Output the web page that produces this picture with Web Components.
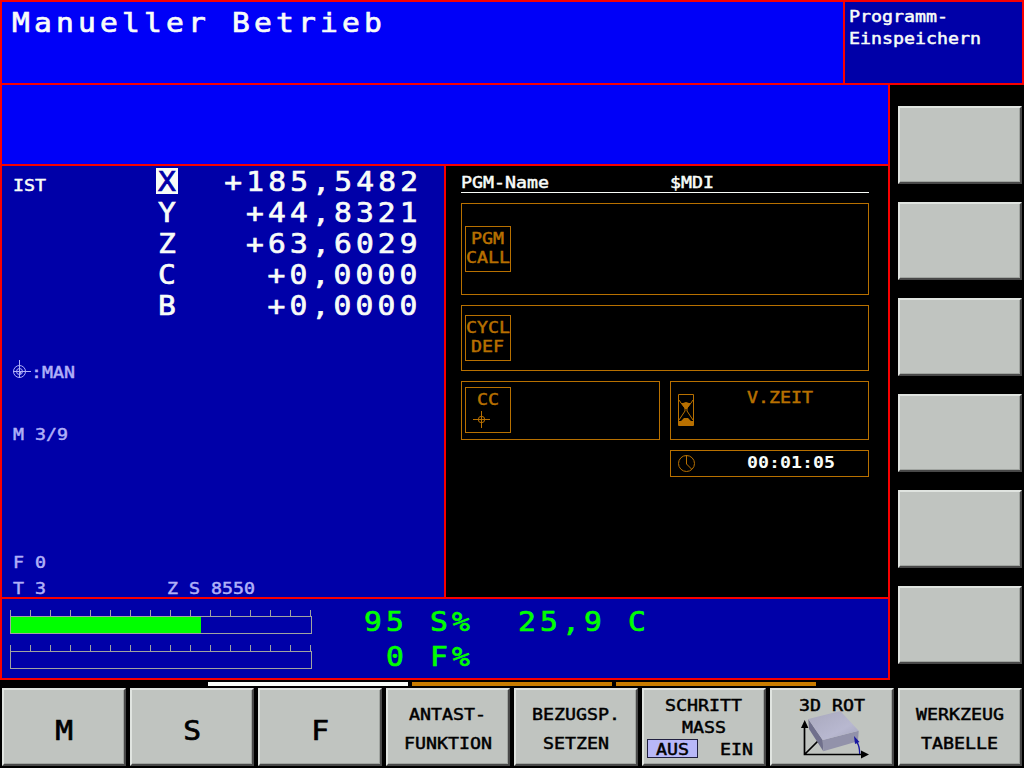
<!DOCTYPE html>
<html lang="de">
<head>
<meta charset="utf-8">
<title>Manueller Betrieb</title>
<style>
html,body{margin:0;padding:0;background:#000}
body{width:1024px;height:768px;overflow:hidden;font-family:"DejaVu Sans Mono","Liberation Mono",monospace}
</style>
</head>
<body>
<cnc-screen></cnc-screen>
<script>
const define = (name, html) => customElements.define(name, class extends HTMLElement {
  constructor() {
    super();
    const t = document.createElement('template');
    t.innerHTML = html;
    this.attachShadow({mode: 'open'}).append(t.content.cloneNode(true));
  }
});

/* Small terminal text: 11px character cells */
define('t-small', `<style>
:host{display:block;height:16px;white-space:pre}
span{display:inline-block;vertical-align:top;font-size:15px;line-height:16px;transform:scaleX(1.218);transform-origin:var(--origin,0) 0;-webkit-text-stroke:.45px currentColor}
:host([bold]) span{font-weight:bold;-webkit-text-stroke:0}
:host([center]){text-align:center;--origin:50%}
</style><span><slot></slot></span>`);

/* Large terminal text: 22px character cells */
define('t-large', `<style>
:host{display:block;height:26px;white-space:pre}
span{display:inline-block;vertical-align:top;font-size:27.4px;line-height:26px;letter-spacing:3.875px;padding-left:1.94px;margin-right:-1.94px;transform:scaleX(1.08);transform-origin:var(--origin,0) 0;-webkit-text-stroke:.7px currentColor}
</style><span><slot></slot></span>`);

define('soft-key', `<style>
:host{display:flex;flex-direction:column;align-items:center;box-sizing:border-box;width:124px;height:78px;background:#c0c4c0;color:#000;border:2px solid;border-color:#e0e4e0 #484848 #484848 #e0e4e0;box-shadow:inset -1px -1px #a0a4a0}
</style><slot></slot>`);

define('axis-row', `<style>
:host{display:flex;height:26px;margin-bottom:5px}
.n,.v{box-sizing:border-box;padding-top:1px}
.n{width:22px;margin-right:22px}
:host([active]) .n{background:#f8fcf8;color:#0000a8}
.v{width:220px;text-align:right;--origin:100%}
</style><t-large class="n"><slot name="n"></slot></t-large><t-large class="v"><slot></slot></t-large>`);

define('load-gauge', `<style>
:host{display:block;width:302px;height:24px}
.t{height:6px;width:301px;background:repeating-linear-gradient(90deg,#a0a4a0 0 1px,transparent 1px 20px)}
.b{height:18px;box-sizing:border-box;border:1px solid #a0a4a0}
.f{height:16px;width:var(--fill,0);background:#0f0}
</style><div class="t"></div><div class="b"><div class="f"></div></div>`);

define('icon-badge', `<style>
:host{display:block;box-sizing:border-box;width:46px;height:46px;border:1px solid #b87000;flex:none}
</style><slot></slot>`);

define('axes-view', `<style>
:host{display:block;height:431px;background:#0000a8;color:#b0b0f8;overflow:hidden}
.top{display:flex;height:157px;padding-top:2px;margin-bottom:33px}
.ist{width:143px;padding:10px 0 0 11px;box-sizing:content-box}
.top t-small{color:#f8fcf8}
.rows{color:#f8fcf8}
t-small{margin-left:11px}
.ist t-small{margin:0}
.man{display:flex;margin-left:11px;height:20px}
.man t-small{margin:7px 0 0 -3px}
svg{display:block;width:21px;height:20px}
.m{margin-top:49px}.f{margin-top:112px}
.t{display:flex;margin-top:10px}
</style>
<div class="top"><div class="ist"><t-small>IST</t-small></div><div class="rows">
<axis-row active><span slot="n">X</span>+185,5482</axis-row>
<axis-row><span slot="n">Y</span>+44,8321</axis-row>
<axis-row><span slot="n">Z</span>+63,6029</axis-row>
<axis-row><span slot="n">C</span>+0,0000</axis-row>
<axis-row><span slot="n">B</span>+0,0000</axis-row></div></div>
<div class="man"><svg viewBox="0 0 21 20" fill="none" stroke="currentColor"><path d="M6.5 2v18M0 13.5h18"/><circle cx="6.5" cy="13.5" r="6"/><circle cx="6.5" cy="13.5" r="3"/><path d="M6 14h3v-1l-2 4z" fill="currentColor" stroke="none"/></svg><t-small>:MAN</t-small></div>
<t-small class="m">M 3/9</t-small>
<t-small class="f">F 0</t-small>
<div class="t"><t-small>T 3</t-small><t-small style="margin-left:127px">Z S 8550</t-small></div>`);

define('status-view', `<style>
:host{display:block;height:431px;box-sizing:border-box;padding:9px 19px 0 15px;background:#000;color:#b87000}
.head{display:flex;height:17px;border-bottom:1px solid #f8fcf8;color:#f8fcf8;margin-bottom:10px}
.head t-small:first-child{width:209px}
.box{box-sizing:border-box;border:1px solid #b87000;padding-left:3px;display:flex}
.pgm{height:92px;padding-top:22px;margin-bottom:10px}
.cyc{height:66px;padding-top:9px;margin-bottom:10px}
.pair{display:grid;grid-template-columns:199px 199px;gap:10px}
.cc,.vz{height:59px;padding-top:5px}
.vz{padding-left:7px;padding-top:12px}
.vz t-small{margin:-4px 0 0 53px}
.clk{grid-column:2;height:27px;padding:4px 0 0 7px}
.clk t-small{margin-left:51px;color:#f8fcf8}
.a{margin-top:4px}.b{margin-top:3px}
icon-badge t-small{display:block}
svg{display:block;flex:none}
</style>
<div class="head"><t-small>PGM-Name</t-small><t-small>$MDI</t-small></div>
<div class="box pgm"><icon-badge><t-small center class="a">PGM</t-small><t-small center class="b">CALL</t-small></icon-badge></div>
<div class="box cyc"><icon-badge><t-small center class="a">CYCL</t-small><t-small center class="b">DEF</t-small></icon-badge></div>
<div class="pair">
<div class="box cc"><icon-badge><t-small center class="a">CC</t-small><svg width="44" height="22" viewBox="0 0 44 22" fill="none" stroke="#b87000"><path d="M15.5 3v17M7 11.5h17"/><circle cx="15.5" cy="11.5" r="3.2"/></svg></icon-badge></div>
<div class="box vz"><svg width="16" height="32" viewBox="0 0 16 32" fill="none" stroke="#b87000"><path d="M.5.5h15v31H.5zM1 6l2 3 4 5v3l-6 9M15 6l-2 3-4 5v3l6 9"/><path d="M3 9h2l3-1 3 1h2l-4 6H7zM1 31v-4h2l3-3h4l3 3h2v4z" fill="#b87000" stroke="none"/></svg><t-small>V.ZEIT</t-small></div>
<div class="box clk"><svg width="18" height="18" viewBox="0 0 18 18" fill="none" stroke="#b87000"><circle cx="8.500" cy="8.500" r="8"/><path d="M8.500 0v9l5 5"/></svg><t-small bold>00:01:05</t-small></div>
</div>`);

define('override-bar', `<style>
:host{display:flex;height:79px;background:#0000a8;box-sizing:border-box;padding:11px 0 0 8px;color:#0f0}
.g{width:352px}
load-gauge{margin-bottom:11px}
t-large{margin:-1px 0 9px}
</style>
<div class="g"><load-gauge style="--fill:190px"></load-gauge><load-gauge></load-gauge></div>
<div><t-large>95 S%  25,9 C</t-large><t-large style="margin-top:0"> 0 F%</t-large></div>`);

define('rot-icon', `<style>:host{display:block;height:52px}svg{display:block}</style>
<svg width="72" height="52" viewBox="800 708 72 52">
<defs><linearGradient id="g" x1="0" y1="0" x2="1" y2="1"><stop offset="0" stop-color="#a8a8bc"/><stop offset=".65" stop-color="#b8b8d0"/><stop offset="1" stop-color="#a4a4bc"/></linearGradient></defs>
<path d="M804.500 726v28.500H863M805 754l14-14" fill="none" stroke="#000" stroke-width="1.700"/>
<path d="M801 728l3.700-8 3.700 8zM861 750.500v8l8-4z"/>
<path d="M808.300 719l14.400 21 .6 11.300L809 729z" fill="#70708c"/>
<path d="M822.700 740l36-9.300-.7 10.500-34.700 10.100z" fill="#9292aa"/>
<path d="M808.300 719l32-8 18.400 19.700-36 9.300z" fill="url(#g)"/>
<path d="M859.700 754q0-8-3-12" fill="none" stroke="#1818a0" stroke-width="1.300"/><path d="M854 736l1 8 4.500-2z" fill="#1818a0"/>
</svg>`);

define('cnc-screen', `<style>
:host{display:block;width:1024px;height:768px;background:#000}
header{display:grid;grid-template-columns:841px 177px;gap:2px;height:81px;padding:2px;background:#f80000;color:#f8fcf8}
.mode{background:#0000f8;padding:8px 0 0 8px}
.side{background:#0000a8;padding:7px 0 0 4px}
.side t-small{margin-bottom:6px}
.mid{display:flex;height:595px}
.main{width:886px;padding:0 2px 2px;display:grid;grid-template-rows:79px 431px 79px;gap:2px;background:#f80000}
.msg{background:#0000f8}
.views{display:grid;grid-template-columns:442px 442px;gap:2px}
.keys{display:flex;flex-direction:column;gap:18px;padding:21px 0 0 8px}
.pages{display:flex;gap:4px;padding:2px 0 2px 208px}
.pages i{width:200px;height:4px;background:#c87c00}
.pages i:first-child{background:#f8fcf8}
footer{display:flex;gap:4px;padding-left:2px}
footer t-large{margin-top:28px;--origin:50%}
.l1{margin-top:17px}.l2{margin-top:13px}
.s1{margin-top:8px}.s2{margin-top:6px}
.opt{display:flex;align-self:stretch;margin:3px 0 0 3px}
.aus{box-sizing:border-box;width:51px;height:19px;border:1px solid #202040;background:#b8b8f8;padding-top:2px}
.ein{margin:3px 0 0 22px}
rot-icon{margin:-6px 0 0 8px}
</style>
<header><div class="mode"><t-large>Manueller Betrieb</t-large></div><div class="side"><t-small>Programm-</t-small><t-small>Einspeichern</t-small></div></header>
<div class="mid"><div class="main"><div class="msg"></div><div class="views"><axes-view></axes-view><status-view></status-view></div><override-bar></override-bar></div>
<div class="keys"><soft-key></soft-key><soft-key></soft-key><soft-key></soft-key><soft-key></soft-key><soft-key></soft-key><soft-key></soft-key></div></div>
<div class="pages"><i></i><i></i><i></i></div>
<footer>
<soft-key><t-large>M</t-large></soft-key><soft-key><t-large>S</t-large></soft-key><soft-key><t-large>F</t-large></soft-key>
<soft-key><t-small center class="l1">ANTAST-</t-small><t-small center class="l2">FUNKTION</t-small></soft-key>
<soft-key><t-small center class="l1">BEZUGSP.</t-small><t-small center class="l2">SETZEN</t-small></soft-key>
<soft-key><t-small center class="s1">SCHRITT</t-small><t-small center class="s2">MASS</t-small><div class="opt"><div class="aus"><t-small center>AUS</t-small></div><t-small class="ein">EIN</t-small></div></soft-key>
<soft-key><t-small center class="s1">3D ROT</t-small><rot-icon></rot-icon></soft-key>
<soft-key><t-small center class="l1">WERKZEUG</t-small><t-small center class="l2">TABELLE</t-small></soft-key>
</footer>`);
</script>
</body>
</html>
